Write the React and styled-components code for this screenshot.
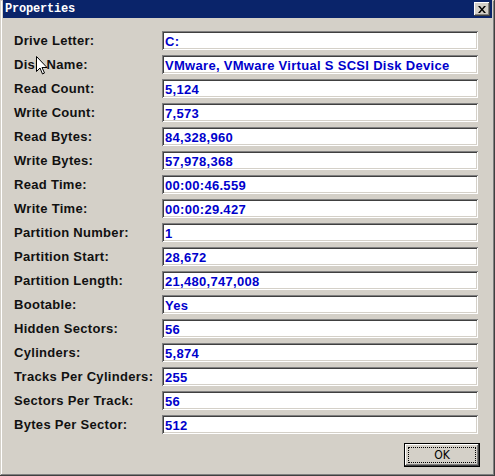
import styled, { createGlobalStyle } from "styled-components"

const GlobalStyle = createGlobalStyle`
  html, body {
    margin: 0;
    padding: 0;
    background: #d4d0c8;
  }
`

const rows = [
    ["Drive Letter:", "C:"],
    ["Disk Name:", "VMware, VMware Virtual S SCSI Disk Device"],
    ["Read Count:", "5,124"],
    ["Write Count:", "7,573"],
    ["Read Bytes:", "84,328,960"],
    ["Write Bytes:", "57,978,368"],
    ["Read Time:", "00:00:46.559"],
    ["Write Time:", "00:00:29.427"],
    ["Partition Number:", "1"],
    ["Partition Start:", "28,672"],
    ["Partition Length:", "21,480,747,008"],
    ["Bootable:", "Yes"],
    ["Hidden Sectors:", "56"],
    ["Cylinders:", "5,874"],
    ["Tracks Per Cylinders:", "255"],
    ["Sectors Per Track:", "56"],
    ["Bytes Per Sector:", "512"],
]

const App = () => {
    return (
        <>
            <GlobalStyle />
            <Window>
                <TitleBar>
                    <Title>Properties</Title>
                    <CloseButton>
                        <svg width="8" height="7" viewBox="0 0 8 7">
                            <path d="M0 0h2l2 2.5L6 0h2L5 3.5 8 7H6L4 4.5 2 7H0l3-3.5z" fill="#000" />
                        </svg>
                    </CloseButton>
                </TitleBar>
                <Content>
                    <Fields>
                        {rows.map(([label, value]) => (
                            <Row key={label}>
                                <Label>{label}</Label>
                                <Field>{value}</Field>
                            </Row>
                        ))}
                    </Fields>
                    <Footer>
                        <OkButton>
                            <Focus>OK</Focus>
                        </OkButton>
                    </Footer>
                    {/* mouse pointer hovering over "Disk Name" */}
                    <Pointer width="12" height="20" viewBox="0 0 12 20">
                        <path d="M0.5 0.5v15l3.5-3.5 2.5 6 2-1-2.5-5.5h5z" fill="#fff" stroke="#000" strokeWidth="1" />
                    </Pointer>
                </Content>
            </Window>
        </>
    )
}

export default App

const Window = styled.div`
position: relative;
width: 495px;
height: 476px;
box-sizing: border-box;
display: flex;
flex-direction: column;
background: #d4d0c8;
padding: 0 3px 3px 3px;
box-shadow: inset -1px -1px #404040, inset 1px 1px #d4d0c8, inset -2px -2px #808080, inset 2px 0 #fff;
`
const TitleBar = styled.div`
height: 18px;
display: flex;
align-items: center;
justify-content: space-between;
background: #0a246a;
padding: 0 2px 0 2px;
`
const Title = styled.span`
color: #fff;
font-family: "Liberation Mono", "DejaVu Sans Mono", monospace;
font-weight: bold;
font-size: 12px;
letter-spacing: -0.2px;
`
const CloseButton = styled.div`
width: 16px;
height: 14px;
box-sizing: border-box;
display: flex;
align-items: center;
justify-content: center;
background: #d4d0c8;
box-shadow: inset -1px -1px #404040, inset 1px 1px #fff, inset -2px -2px #808080;
`
const Content = styled.div`
position: relative;
flex: 1;
display: flex;
flex-direction: column;
padding: 13px 12px 0 11px;
`
const Fields = styled.div`
display: flex;
flex-direction: column;
gap: 5px;
`
const Row = styled.div`
display: grid;
grid-template-columns: 148px 316px;
align-items: center;
`
const Label = styled.span`
font-family: "Liberation Sans", Arial, sans-serif;
font-weight: bold;
font-size: 13px;
letter-spacing: 0.3px;
color: #111;
`
const Field = styled.div`
height: 19px;
box-sizing: border-box;
background: #fff;
padding: 1px 0 0 3px;
display: flex;
align-items: center;
font-family: "Liberation Sans", Arial, sans-serif;
font-weight: bold;
font-size: 13px;
letter-spacing: 0.3px;
color: #0000cc;
white-space: nowrap;
box-shadow: inset 1px 1px #808080, inset -1px -1px #fff, inset 2px 2px #404040, inset -2px -2px #d4d0c8;
`
const Footer = styled.div`
display: flex;
justify-content: flex-end;
padding: 9px 0 0 0;
`
const OkButton = styled.div`
width: 76px;
height: 24px;
box-sizing: border-box;
padding: 4px;
background: #d4d0c8;
box-shadow: inset 0 0 0 1px #000, inset -2px -2px #404040, inset 2px 2px #fff, inset -3px -3px #808080;
`
const Focus = styled.div`
height: 100%;
box-sizing: border-box;
border: 1px dotted #000;
display: flex;
align-items: center;
justify-content: center;
font-family: "DejaVu Sans Condensed", "Liberation Sans Narrow", sans-serif;
font-size: 12px;
color: #000;
`
const Pointer = styled.svg`
position: absolute;
left: 33px;
top: 38px;
`
